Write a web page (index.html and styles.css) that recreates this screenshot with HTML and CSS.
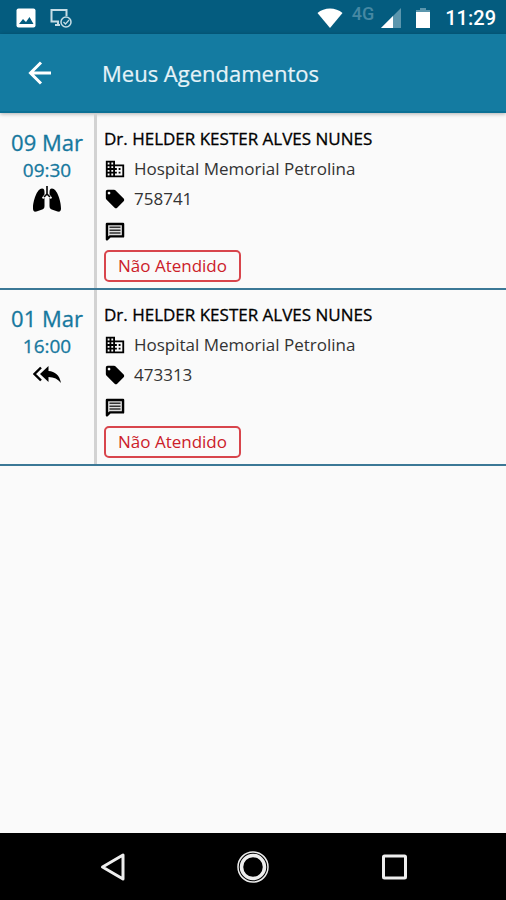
FILE: index.html
```html
<!DOCTYPE html>
<html lang="pt-BR">
<head>
<meta charset="utf-8">
<meta name="viewport" content="width=device-width, initial-scale=1">
<title>Meus Agendamentos</title>
<link rel="stylesheet" href="styles.css">
</head>
<body>
<svg class="defs" aria-hidden="true">
  <symbol id="business" viewBox="0 0 24 24"><path d="M12 7V3H2v18h20V7H12zM6 19H4v-2h2v2zm0-4H4v-2h2v2zm0-4H4V9h2v2zm0-4H4V5h2v2zm4 12H8v-2h2v2zm0-4H8v-2h2v2zm0-4H8V9h2v2zm0-4H8V5h2v2zm10 12h-8v-2h2v-2h-2v-2h2v-2h-2V9h8v10zm-2-8h-2v2h2v-2zm0 4h-2v2h2v-2z"/></symbol>
  <symbol id="tag" viewBox="0 0 24 24"><path d="M21.410 11.580l-9-9C12.050 2.220 11.550 2 11 2H4c-1.100 0-2 .9-2 2v7c0 .55.22 1.050.59 1.420l9 9c.36.36.86.58 1.410.58s1.050-.22 1.410-.59l7-7c.37-.36.59-.86.59-1.410s-.23-1.060-.59-1.420zM5.500 7C4.670 7 4 6.330 4 5.500S4.670 4 5.500 4 7 4.670 7 5.500 6.330 7 5.500 7z"/></symbol>
  <symbol id="message" viewBox="0 0 24 24"><path d="M3.200 3.200h17.600v13.600H6.500L3.200 20z" fill="#ddd" stroke="#000" stroke-width="2.600" stroke-linejoin="round"/><path d="M6 6h12v1.600H6zM6 9.200h12v1.600H6zM6 12.400h12v1.600H6z" fill="#333"/></symbol>
</svg>

<header class="status-bar">
  <div class="status-group">
    <svg class="icon-status" viewBox="0 0 20 20" aria-hidden="true"><rect x="0.500" y="0.500" width="19" height="19" rx="2" fill="#fff"/><path d="M3 16l4-5 3 3 3.500-5L17.500 16z" fill="#045c7f"/></svg>
    <svg class="icon-cast" viewBox="0 0 22 20" aria-hidden="true"><g fill="none" stroke="#c6dde6"><path d="M9 13.500H1.500V2h15v6" stroke-width="2"/><path d="M5 17h5M8 13v4" stroke-width="2"/><circle cx="16" cy="14" r="5" stroke-width="1.500"/><path d="M13.500 14l2 2 3.500-4" stroke-width="1.200"/></g></svg>
  </div>
  <div class="status-group">
    <svg class="icon-wifi" viewBox="0 0 26 20" aria-hidden="true"><path d="M0.500 5C7-1 19-1 25.500 5L13 20z" fill="#fff"/></svg>
    <span class="network">4G</span>
    <svg class="icon-signal" viewBox="0 0 20 20" aria-hidden="true"><path d="M0 20L20 0v20z" fill="#5b96ad"/><path d="M0 20L12 8v12z" fill="#fff"/></svg>
    <svg class="icon-battery" viewBox="0 0 14 20" aria-hidden="true"><path d="M4 0h6v2h4v3H0V2h4z" fill="#5b96ad"/><path d="M0 4h14v16H0z" fill="#fff"/></svg>
    <time class="clock">11:29</time>
  </div>
</header>

<div class="app-bar">
  <button class="back" type="button" aria-label="Voltar"><svg viewBox="0 0 24 24" aria-hidden="true"><path d="M23 12H3M13 1.500L2.500 12 13 22.500" fill="none" stroke="#fff" stroke-width="3"/></svg></button>
  <h1 class="title">Meus Agendamentos</h1>
</div>

<main class="list">
  <article class="appointment">
    <div class="when">
      <span class="date">09 Mar</span>
      <span class="time">09:30</span>
      <svg class="kind" viewBox="0 0 28 26" aria-hidden="true"><path d="M14 0v8M14 8l-3 3M14 8l3 3" fill="none" stroke="#000" stroke-width="1.600"/><path d="M9 2.500c2 0 2.500 1.500 2.500 4v2L9 11.500l1 1.500 1.500-1V20c0 2.500-1 3-3 3.700L3.500 25.500C1 26 0 25 0 22.500 0 15 4 2.500 9 2.500zM19 2.500c-2 0-2.500 1.500-2.500 4v2l2.500 3-1 1.500-1.500-1V20c0 2.500 1 3 3 3.700l5 1.800c2.500.5 3.500-.5 3.500-3C28 15 24 2.500 19 2.500z"/></svg>
    </div>
    <div class="details">
      <h2 class="doctor">Dr. HELDER KESTER ALVES NUNES</h2>
      <p class="row"><svg class="icon" aria-hidden="true"><use href="#business"/></svg>Hospital Memorial Petrolina</p>
      <p class="row"><svg class="icon" aria-hidden="true"><use href="#tag"/></svg>758741</p>
      <p class="row note"><svg class="icon" aria-hidden="true"><use href="#message"/></svg></p>
      <span class="status">Não Atendido</span>
    </div>
  </article>
  <article class="appointment">
    <div class="when">
      <span class="date">01 Mar</span>
      <span class="time">16:00</span>
      <svg class="kind" viewBox="0 0 28 26" aria-hidden="true"><path d="M8 5.500L1.500 12 8 18.500" fill="none" stroke="#000" stroke-width="2.400"/><path d="M15.500 4v5C22 9.500 26.500 13 28 21c-3-4-7-6-12.500-6v5L7 12z"/></svg>
    </div>
    <div class="details">
      <h2 class="doctor">Dr. HELDER KESTER ALVES NUNES</h2>
      <p class="row"><svg class="icon" aria-hidden="true"><use href="#business"/></svg>Hospital Memorial Petrolina</p>
      <p class="row"><svg class="icon" aria-hidden="true"><use href="#tag"/></svg>473313</p>
      <p class="row note"><svg class="icon" aria-hidden="true"><use href="#message"/></svg></p>
      <span class="status">Não Atendido</span>
    </div>
  </article>
</main>

<nav class="system-nav">
  <button type="button" aria-label="Voltar"><svg viewBox="0 0 32 32" aria-hidden="true"><path d="M27 4v24L6.500 16z" fill="none" stroke="#eee" stroke-width="3" stroke-linejoin="round"/></svg></button>
  <button type="button" aria-label="Início"><svg viewBox="0 0 32 32" aria-hidden="true"><g fill="none" stroke="#eee"><circle cx="16" cy="16" r="15" stroke-width="1.500"/><circle cx="16" cy="16" r="11.500" stroke-width="3.500"/></g></svg></button>
  <button type="button" aria-label="Recentes"><svg viewBox="0 0 32 32" aria-hidden="true"><rect x="5.500" y="5" width="22" height="22" rx="1" fill="none" stroke="#eee" stroke-width="3"/></svg></button>
</nav>
</body>
</html>
```
FILE: styles.css
```css
* {
  box-sizing: border-box;
}

body {
  margin: 0;
  min-height: 100vh;
  display: flex;
  flex-direction: column;
  background: #fafafa;
  color: #111;
  font-family: "Open Sans", "Noto Sans", sans-serif;
  font-size: 16px;
}

h1, h2, p {
  margin: 0;
}

button {
  padding: 0;
  border: 0;
  background: none;
}

svg {
  display: block;
  flex: none;
}

.defs {
  position: absolute;
  width: 0;
  height: 0;
}

.status-bar {
  display: flex;
  justify-content: space-between;
  align-items: center;
  height: 34px;
  padding: 2px 10px 0 16px;
  background: #045c7f;
}

.status-group {
  display: flex;
  align-items: center;
  height: 100%;
}

.icon-status {
  width: 20px;
  height: 20px;
  margin-right: 14px;
}

.icon-cast {
  width: 22px;
  height: 20px;
}

.icon-wifi {
  width: 26px;
  height: 20px;
}

.network {
  margin: 0 7px 8px 9px;
  color: #4688a3;
  font: 500 18px/20px Roboto, sans-serif;
}

.icon-signal {
  width: 20px;
  height: 20px;
  margin-right: 15px;
}

.icon-battery {
  width: 14px;
  height: 20px;
  margin-right: 15px;
}

.clock {
  color: #fff;
  font: 500 20px/24px Roboto, sans-serif;
}

.app-bar {
  display: flex;
  align-items: center;
  gap: 50px;
  height: 79px;
  padding: 1px 0 0 28px;
  background: #147ba1;
  border-bottom: 2px solid #0b7095;
  box-shadow: 0 1px 4px rgba(0, 0, 0, 0.3);
}

.back svg {
  width: 24px;
  height: 24px;
}

.title {
  color: #e6f3f8;
  font-size: 22px;
  font-weight: 400;
  line-height: 32px;
  -webkit-text-stroke: 0.2px;
}

.list {
  flex: 1;
  padding-top: 1px;
}

.appointment {
  display: grid;
  grid-template-columns: 97px 1fr;
  border-bottom: 2px solid #3b7896;
}

.when {
  display: flex;
  flex-direction: column;
  align-items: center;
  padding-top: 12px;
  border-right: 3px solid #d2d2d2;
  color: #16789e;
  -webkit-text-stroke: 0.3px;
}

.date {
  font-size: 22px;
  line-height: 32px;
}

.time {
  font-size: 19px;
  line-height: 25px;
}

.kind {
  width: 28px;
  height: 26px;
  margin-top: 3px;
  fill: #000;
}

.details {
  padding: 10px 7px 6px;
}

.doctor {
  font-size: 17px;
  font-weight: 400;
  line-height: 30px;
  color: #000;
  -webkit-text-stroke: 0.3px;
}

.row {
  display: flex;
  align-items: center;
  gap: 8px;
  height: 30px;
  font-size: 17px;
  line-height: 30px;
  color: #333;
}

.icon {
  width: 22px;
  height: 22px;
  fill: #000;
}

.note {
  height: 36px;
}

.status {
  display: inline-block;
  padding: 0 12px;
  border: 2px solid #d8454c;
  border-radius: 5px;
  color: #cc2029;
  font-size: 17px;
  line-height: 28px;
}

.system-nav {
  display: flex;
  height: 67px;
  padding: 0 42px;
  background: #000;
}

.system-nav button {
  flex: 1;
  display: flex;
  align-items: center;
  justify-content: center;
}

.system-nav svg {
  width: 32px;
  height: 32px;
}
```
